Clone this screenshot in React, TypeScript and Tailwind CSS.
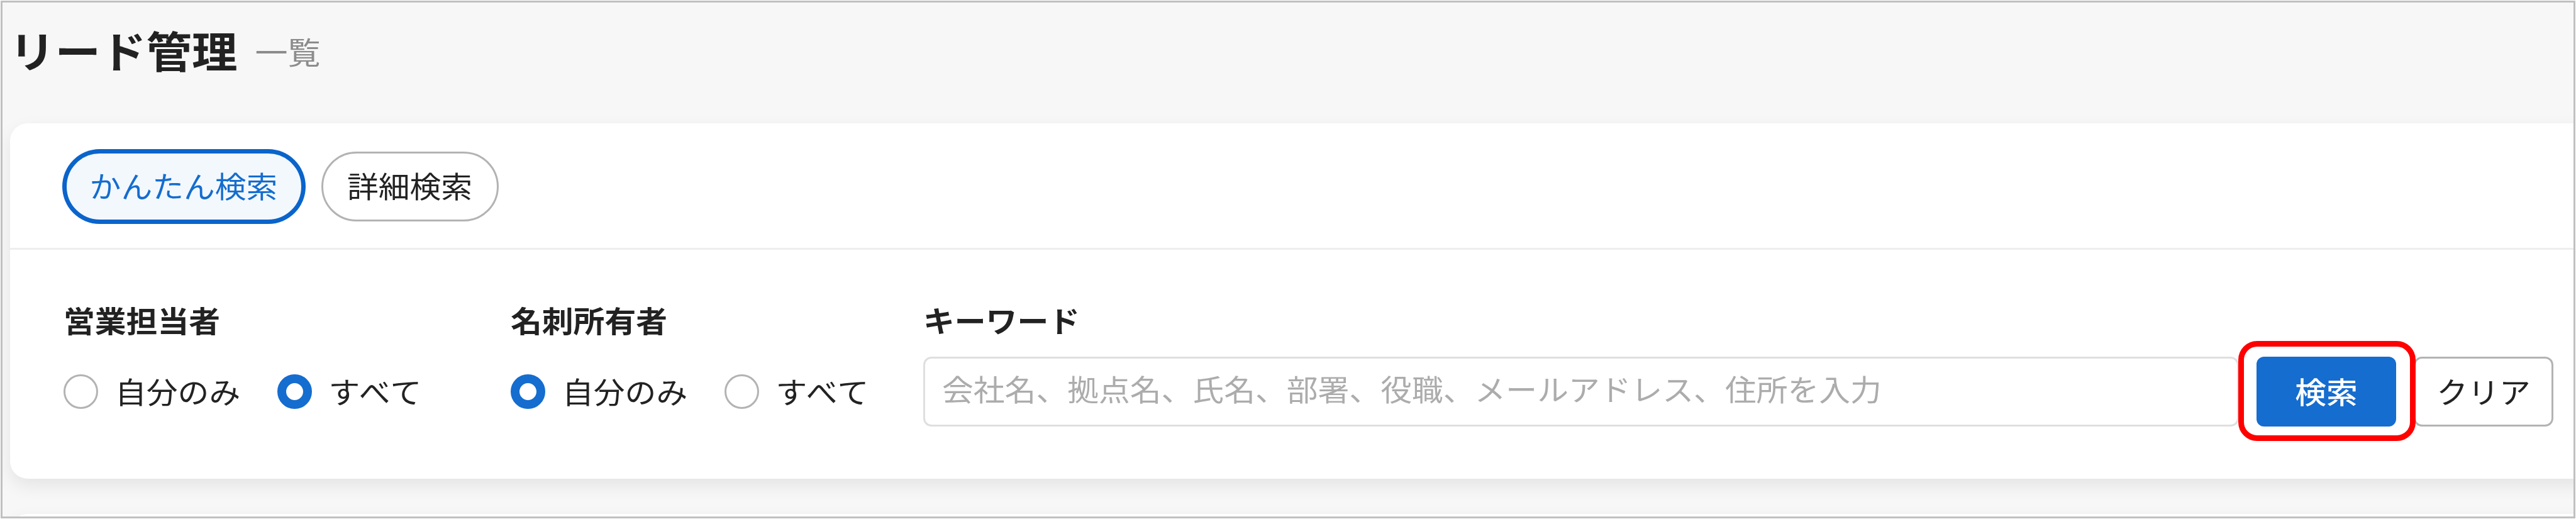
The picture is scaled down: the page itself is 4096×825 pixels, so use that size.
import { ReactNode, useState } from 'react';
import clsx from 'clsx';

type Scope = 'mine' | 'all';

export default function App() {
  const [detail, setDetail] = useState(false);

  return (
    <div className="h-[825px] w-[4096px] overflow-hidden bg-white p-px font-['Noto_Sans_CJK_JP',sans-serif] text-[49.8px] leading-none text-[#222222]">
      <div className="h-[823px] overflow-hidden border-3 border-[#c0c0c0] bg-[#f7f7f7] pl-[12px]">
        <header className="flex h-[192px] items-start pt-[39px]">
          <h1 className="-ml-px text-[72.5px] font-bold">
            <Glyphs>リード管理</Glyphs>
          </h1>
          <p className="mt-[12px] ml-[28px] text-[52px] text-[#8c8c8c]">
            <Glyphs>一覧</Glyphs>
          </p>
        </header>

        <section className="h-[565px] w-[4140px] rounded-[28px] bg-white shadow-[0_11px_28px_rgba(0,0,0,0.078)]">
          <div className="flex h-[201px] items-start gap-[29px] border-b-3 border-[#eeeeee] pt-[45px] pl-[86.5px]">
            <Tab active={!detail} width="w-[379px]" onClick={() => setDetail(false)}>
              かんたん検索
            </Tab>
            <Tab active={detail} width="w-[282px]" onClick={() => setDetail(true)}>
              詳細検索
            </Tab>
          </div>

          <div className="flex pt-[86px] pl-[85px]">
            <RadioField label="営業担当者" name="sales" initial="all" width="w-[711px]" />
            <RadioField label="名刺所有者" name="owner" initial="mine" width="w-[656px]" />
            <div>
              <Label>キーワード</Label>
              <div className="mt-[34px] flex gap-[28px]">
                <div className="flex h-[111px] w-[2092px] items-center rounded-[13px] border-[3.5px] border-[#dfdfdf] pb-[12px] pl-[27px] text-[#acacac]">
                  <Glyphs>会社名、拠点名、氏名、部署、役職、メールアドレス、住所を入力</Glyphs>
                </div>
                <div className="relative">
                  <button className="h-[111px] w-[222px] rounded-[12px] bg-[#146dcf] pb-[4px] font-medium text-white">
                    <Glyphs>検索</Glyphs>
                  </button>
                  <div className="pointer-events-none absolute -top-[25px] -left-[29px] h-[159px] w-[282px] rounded-[30px] border-[9.5px] border-[#ff0000]" />
                </div>
                <button className="h-[111px] w-[222px] rounded-[13px] border-[3.5px] border-[#b3b3b3] pb-[4px]">
                  <Glyphs>クリア</Glyphs>
                </button>
              </div>
            </div>
          </div>
        </section>

        <section className="mt-[56px] h-[200px] w-[4140px] rounded-[28px] bg-white shadow-[0_11px_28px_rgba(0,0,0,0.078)]" />
      </div>
    </div>
  );
}

// slightly flattened letterforms, wider than tall
function Glyphs({ children }: { children: ReactNode }) {
  return <span className="inline-block scale-y-94 whitespace-nowrap">{children}</span>;
}

function Label({ children }: { children: ReactNode }) {
  return (
    <div className="h-[50px] font-bold">
      <Glyphs>{children}</Glyphs>
    </div>
  );
}

function Tab({ active, width, onClick, children }: { active: boolean; width: string; onClick: () => void; children: ReactNode }) {
  return (
    <button
      onClick={onClick}
      className={clsx(
        'h-[111px] rounded-full border-[3.5px] pb-[5px]',
        width,
        active ? 'border-[#0a64cb] bg-[#f3f8fd] text-[#146dcf] ring-4 ring-[#0a64cb]' : 'border-[#b3b3b3] bg-white',
      )}
    >
      <Glyphs>{children}</Glyphs>
    </button>
  );
}

function RadioField({ label, name, initial, width }: { label: string; name: string; initial: Scope; width: string }) {
  const [value, setValue] = useState<Scope>(initial);

  return (
    <div className={width}>
      <Label>{label}</Label>
      <div role="radiogroup" aria-label={name} className="mt-[62px] flex items-center">
        <Radio label="自分のみ" checked={value === 'mine'} onClick={() => setValue('mine')} width="w-[339.5px]" />
        <Radio label="すべて" checked={value === 'all'} onClick={() => setValue('all')} width="w-[300px] tracking-[2px]" />
      </div>
    </div>
  );
}

function Radio({ label, checked, width, onClick }: { label: string; checked: boolean; width: string; onClick: () => void }) {
  return (
    <button role="radio" aria-checked={checked} onClick={onClick} className={clsx('flex items-center gap-[27px]', width)}>
      <span
        className={clsx(
          'size-[55px] shrink-0 rounded-full bg-white',
          checked ? 'border-[14px] border-[#146dcf]' : 'border-[3.5px] border-[#b3b3b3]',
        )}
      />
      <span className="pb-[4px]">
        <Glyphs>{label}</Glyphs>
      </span>
    </button>
  );
}
